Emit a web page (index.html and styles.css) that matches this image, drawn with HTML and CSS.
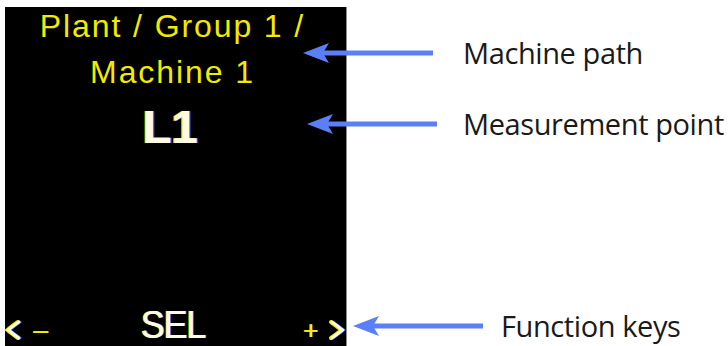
FILE: index.html
```html
<!DOCTYPE html>
<html lang="en">
<head>
  <meta charset="UTF-8">
  <title>Display layout</title>
  <link rel="stylesheet" href="styles.css">
</head>
<body>
  <div class="figure">
    <div class="screen">
      <div class="path">Plant / Group 1 /<br>Machine 1</div>
      <div class="point">L1</div>
      <div class="keys">
        <div class="key-group">
          <svg class="chev" width="18" height="22" viewBox="0 0 18 22">
            <path d="M14 3 Q7 8 3.5 11 Q7 14 14 19" fill="none" stroke="#f2ea00" stroke-width="4" stroke-linecap="round" transform="translate(-1 0)"/>
            <path d="M14 3 Q7 8 3.5 11 Q7 14 14 19" fill="none" stroke="#2a4cff" stroke-width="3" stroke-linecap="round" transform="translate(1 0)"/>
            <path d="M14 3 Q7 8 3.5 11 Q7 14 14 19" fill="none" stroke="#fffbe0" stroke-width="3" stroke-linecap="round"/>
          </svg>
          <span class="sign">–</span>
        </div>
        <span class="sel">SEL</span>
        <div class="key-group">
          <span class="sign">+</span>
          <svg class="chev" width="18" height="22" viewBox="0 0 18 22">
            <path d="M4 3 Q11 8 14.5 11 Q11 14 4 19" fill="none" stroke="#f2ea00" stroke-width="4" stroke-linecap="round" transform="translate(-1 0)"/>
            <path d="M4 3 Q11 8 14.5 11 Q11 14 4 19" fill="none" stroke="#2a4cff" stroke-width="3" stroke-linecap="round" transform="translate(1 0)"/>
            <path d="M4 3 Q11 8 14.5 11 Q11 14 4 19" fill="none" stroke="#fffbe0" stroke-width="3" stroke-linecap="round"/>
          </svg>
        </div>
      </div>
    </div>

    <div class="notes">
      <div class="note note-path">
        <svg class="arrow" width="130" height="22" viewBox="0 0 130 22">
          <line x1="18" y1="11" x2="130" y2="11" stroke="#5b7ff7" stroke-width="5"/>
          <polygon points="0,11 26,1 20,11 26,21" fill="#5b7ff7"/>
        </svg>
        <span class="label">Machine path</span>
      </div>
      <div class="note note-point">
        <svg class="arrow" width="130" height="22" viewBox="0 0 130 22">
          <line x1="18" y1="11" x2="130" y2="11" stroke="#5b7ff7" stroke-width="5"/>
          <polygon points="0,11 26,1 20,11 26,21" fill="#5b7ff7"/>
        </svg>
        <span class="label">Measurement point</span>
      </div>
      <div class="note note-keys">
        <svg class="arrow" width="130" height="22" viewBox="0 0 130 22">
          <line x1="18" y1="11" x2="130" y2="11" stroke="#5b7ff7" stroke-width="5"/>
          <polygon points="0,11 26,1 20,11 26,21" fill="#5b7ff7"/>
        </svg>
        <span class="label">Function keys</span>
      </div>
    </div>
  </div>
</body>
</html>
```

FILE: styles.css
```css
body {
  background-color: white;
  margin: 0;
  padding: 0;
  height: 346px;
  overflow: hidden;
}

.figure {
  display: flex;
  padding: 7px 0 0 5px;
  height: 339px;
}

.screen {
  width: 341px;
  height: 339px;
  background: black;
  border-right: 1px solid #8a8a8a;
  display: flex;
  flex-direction: column;
  align-items: center;
  font-family: "Liberation Sans", Arial, sans-serif;
  flex-shrink: 0;
}

.path {
  color: #f2ea00;
  font-size: 32px;
  line-height: 46px;
  letter-spacing: 1.9px;
  text-align: center;
  padding-right: 6px;
  margin-top: -4px;
}

.point {
  color: #fffbe0;
  font-weight: bold;
  font-size: 47px;
  line-height: 50px;
  margin-top: 7px;
  padding-right: 10px;
  text-shadow: -1.5px 0 #f2ea00, 1.5px 0 #2a3cff;
}

.keys {
  margin-top: auto;
  width: 100%;
  display: flex;
  justify-content: space-between;
  align-items: flex-end;
  height: 38px;
}

.key-group {
  display: flex;
  align-items: center;
  gap: 10px;
  height: 32px;
}

.sign {
  color: #f2ea00;
  font-size: 26px;
  line-height: 30px;
  text-shadow: 1px 0 #c8d0ff;
}

.sel {
  color: #fffbe0;
  font-size: 36px;
  line-height: 38px;
  letter-spacing: -1.2px;
  text-shadow: -1px 0 #f2ea00, 1px 0 #2a3cff;
  margin-right: 4px;
  transform: scaleY(1.1);
  transform-origin: bottom;
}

.notes {
  display: flex;
  flex-direction: column;
  margin-left: -44px;
  font-family: "Open Sans", sans-serif;
}

.note {
  display: flex;
  align-items: center;
  height: 30px;
}

.note-path {
  margin-top: 31px;
}

.note-path .arrow {
  margin-right: 30px;
}

.note-point {
  margin-top: 41px;
  margin-left: 4px;
}

.note-point .arrow {
  margin-right: 26px;
}

.note-keys {
  margin-top: 172px;
  margin-left: 50px;
}

.note-keys .arrow {
  margin-right: 18px;
}

.label {
  color: #1a1a1a;
  font-size: 29px;
  line-height: 30px;
  letter-spacing: -0.4px;
  white-space: nowrap;
}
```
